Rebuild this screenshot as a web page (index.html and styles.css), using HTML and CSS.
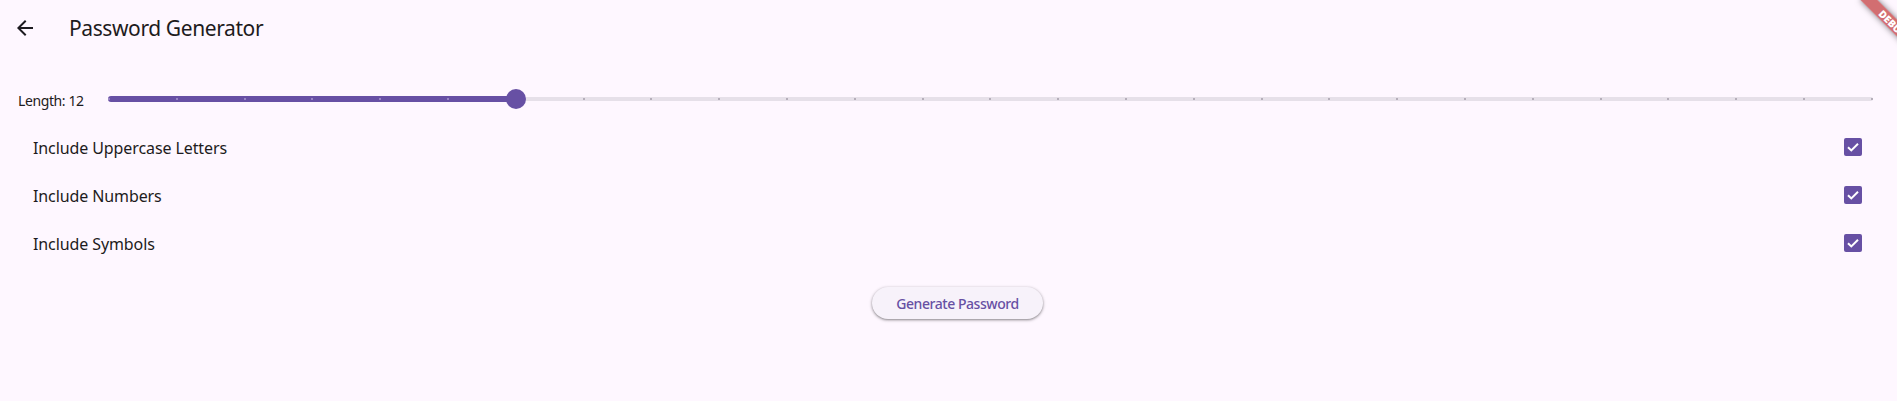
FILE: index.html
```html
<!DOCTYPE html>
<html lang="en">
<head>
<meta charset="utf-8">
<title>Password Generator</title>
<link rel="stylesheet" href="styles.css">
</head>
<body>
<div class="app">
  <header class="appbar">
    <button class="back" aria-label="Back">
      <svg viewBox="0 0 24 24" width="24" height="24"><path d="M20 11H7.83l5.59-5.59L12 4l-8 8 8 8 1.41-1.41L7.83 13H20v-2z" fill="#1D1B20"/></svg>
    </button>
    <h1 class="title">Password Generator</h1>
  </header>
  <main class="content">
    <div class="slider-row">
      <span class="len">Length: 12</span>
      <div class="slider">
        <div class="track">
          <div class="active" style="width: calc(1px + (100% - 2px) * 0.2307692)"></div>
          <div class="ticks">
            <i class="on"></i><i class="on"></i><i class="on"></i><i class="on"></i><i class="on"></i><i class="on"></i><i class="on"></i>
            <i></i><i></i><i></i><i></i><i></i><i></i><i></i><i></i><i></i><i></i><i></i><i></i><i></i><i></i><i></i><i></i><i></i><i></i><i></i><i></i>
          </div>
          <div class="thumb" style="left: calc(1px + (100% - 2px) * 0.2307692)"></div>
        </div>
      </div>
    </div>
    <div class="option"><span class="opt-label">Include Uppercase Letters</span><span class="check"><svg viewBox="0 0 18 18" width="18" height="18"><path d="M4 9.2l3.3 3.2L14 5.8" fill="none" stroke="#fff" stroke-width="2"/></svg></span></div>
    <div class="option"><span class="opt-label">Include Numbers</span><span class="check"><svg viewBox="0 0 18 18" width="18" height="18"><path d="M4 9.2l3.3 3.2L14 5.8" fill="none" stroke="#fff" stroke-width="2"/></svg></span></div>
    <div class="option"><span class="opt-label">Include Symbols</span><span class="check"><svg viewBox="0 0 18 18" width="18" height="18"><path d="M4 9.2l3.3 3.2L14 5.8" fill="none" stroke="#fff" stroke-width="2"/></svg></span></div>
    <div class="actions"><button class="gen">Generate Password</button></div>
  </main>
  <div class="debug-banner">DEBUG</div>
</div>
</body>
</html>
```
FILE: styles.css
```css
* { box-sizing: border-box; }
html, body {
  margin: 0;
  padding: 0;
  height: 100%;
  overflow: hidden;
  background: #FEF7FF;
}
body {
  font-family: "Segoe UI", "Noto Sans", sans-serif;
  color: #1D1B20;
}
.app {
  position: relative;
  width: 100%;
  height: 100%;
}
.appbar {
  height: 56px;
  display: flex;
  align-items: center;
}
.back {
  width: 24px;
  height: 24px;
  margin-left: 13px;
  padding: 0;
  border: 0;
  background: none;
  display: flex;
}
.title {
  margin: 0 0 0 32px;
  font-size: 21px;
  font-weight: 400;
  letter-spacing: -0.4px;
  line-height: 28px;
}
.content {
  padding-top: 19px;
}
.slider-row {
  height: 48px;
  display: flex;
  align-items: center;
  padding-left: 16px;
}
.len {
  width: 68px;
  font-size: 14px;
  letter-spacing: -0.4px;
  white-space: nowrap;
  padding: 2px 0 0 2px;
}
.slider {
  flex: 1;
  padding: 0 24px;
}
.track {
  position: relative;
  height: 4px;
  border-radius: 2px;
  background: #E6E0E9;
}
.active {
  position: absolute;
  left: 0;
  top: -1px;
  height: 6px;
  border-radius: 3px 0 0 3px;
  background: #6750A4;
}
.ticks {
  position: absolute;
  inset: 1px 0 1px 0;
  display: flex;
  justify-content: space-between;
}
.ticks i {
  width: 2px;
  height: 2px;
  border-radius: 1px;
  background: #A49EAA;
}
.ticks i.on {
  background: #A896D0;
}
.thumb {
  position: absolute;
  top: -8px;
  width: 20px;
  height: 20px;
  margin-left: -10px;
  border-radius: 50%;
  background: #6750A4;
}
.option {
  height: 48px;
  display: flex;
  align-items: center;
  justify-content: space-between;
  padding: 0 35px 0 33px;
}
.opt-label {
  font-size: 16px;
  letter-spacing: -0.1px;
  padding-top: 2px;
}
.check {
  width: 18px;
  height: 18px;
  border-radius: 2px;
  background: #6750A4;
  display: flex;
}
.actions {
  display: flex;
  justify-content: center;
  padding: 20px 0 0 18px;
}
.gen {
  height: 32px;
  padding: 0 24px;
  border: 0;
  border-radius: 16px;
  background: #F7F2FA;
  color: #6750A4;
  font-family: "Segoe UI", "Noto Sans", sans-serif;
  font-size: 14px;
  font-weight: 500;
  letter-spacing: -0.45px;
  box-shadow: 0 1px 2px rgba(0,0,0,0.3), 0 1px 3px 1px rgba(0,0,0,0.15);
}
.debug-banner {
  position: absolute;
  top: 18px;
  right: -36px;
  width: 80px;
  height: 12px;
  transform: rotate(45deg);
  background: rgba(183, 28, 28, 0.627);
  box-shadow: 0 0 6px rgba(0,0,0,0.5);
  color: #fff;
  font-family: "Noto Sans", sans-serif;
  font-size: 10.2px;
  font-weight: 900;
  line-height: 12px;
  text-align: center;
}
```
